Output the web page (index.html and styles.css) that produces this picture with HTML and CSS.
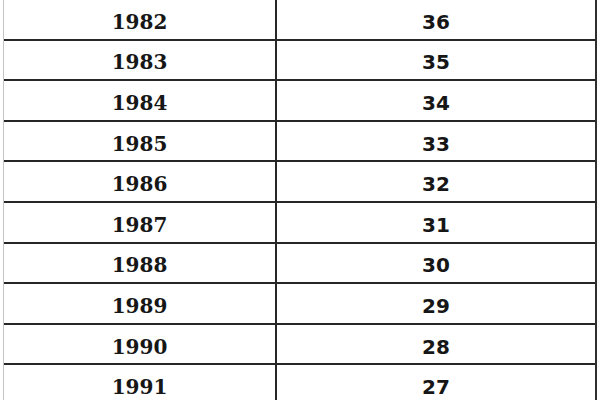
FILE: index.html
```html
<!DOCTYPE html>
<html>
<head>
<meta charset="utf-8">
<link rel="stylesheet" href="styles.css">
</head>
<body>
<div class="table">
  <div class="row"><div class="year">1982</div><div class="age">36</div></div>
  <div class="row"><div class="year">1983</div><div class="age">35</div></div>
  <div class="row"><div class="year">1984</div><div class="age">34</div></div>
  <div class="row"><div class="year">1985</div><div class="age">33</div></div>
  <div class="row"><div class="year">1986</div><div class="age">32</div></div>
  <div class="row"><div class="year">1987</div><div class="age">31</div></div>
  <div class="row"><div class="year">1988</div><div class="age">30</div></div>
  <div class="row"><div class="year">1989</div><div class="age">29</div></div>
  <div class="row"><div class="year">1990</div><div class="age">28</div></div>
  <div class="row"><div class="year">1991</div><div class="age">27</div></div>
</div>
</body>
</html>
```
FILE: styles.css
```css
html, body {
  margin: 0;
  padding: 0;
  background: #ffffff;
  overflow: hidden;
}
.table {
  margin-left: 3px;
  width: 594px;
  border-left: 1px solid #c4c4c4;
  border-right: 2px solid #2e2e2e;
  box-sizing: border-box;
}
.row {
  display: grid;
  grid-template-columns: 273px 1fr;
  height: 40.6px;
  box-sizing: border-box;
  border-bottom: 2px solid #262626;
}
.year, .age {
  display: flex;
  align-items: center;
  justify-content: center;
  padding-top: 5px;
  box-sizing: border-box;
  font-size: 20px;
  font-weight: bold;
  color: #161616;
}
.year {
  border-right: 2px solid #262626;
  font-family: "DejaVu Serif", serif;
}
.age {
  font-family: "DejaVu Sans", sans-serif;
}
```
